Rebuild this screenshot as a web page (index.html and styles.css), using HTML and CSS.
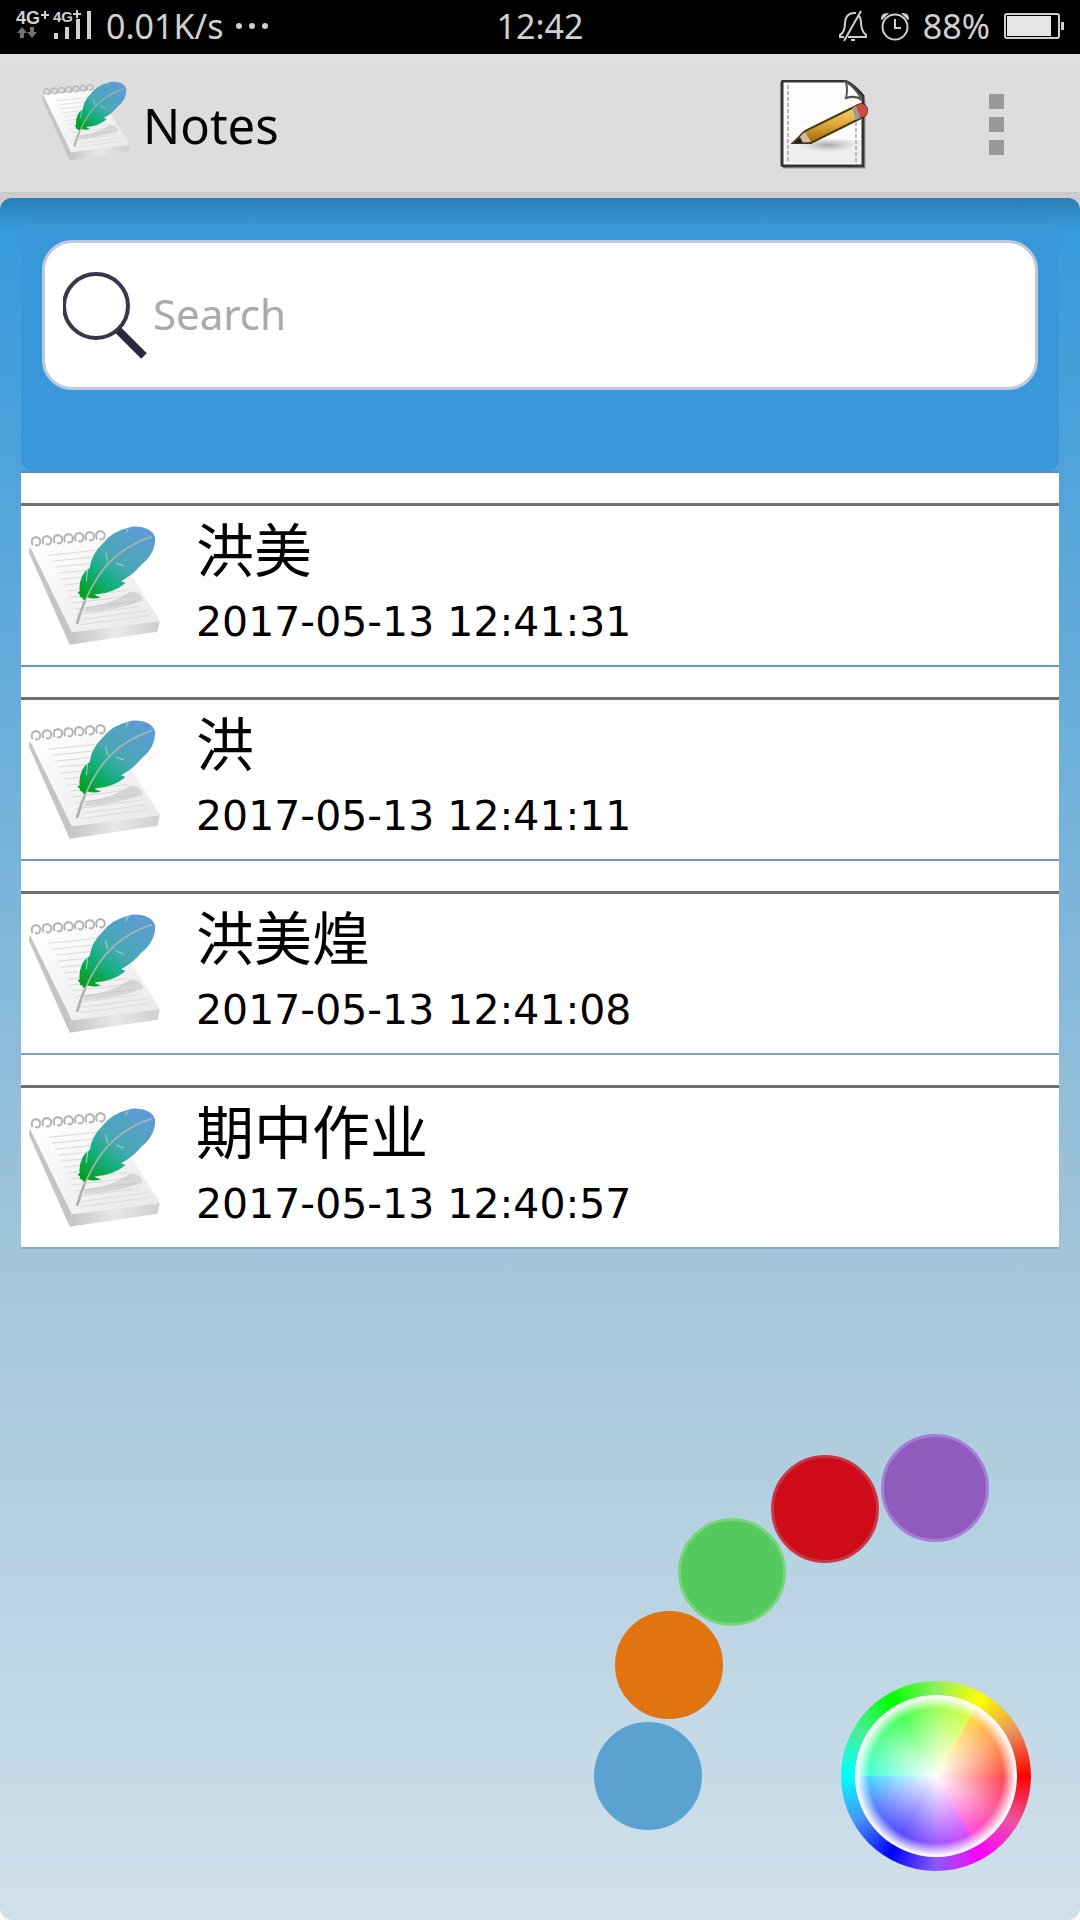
FILE: index.html
```html
<!DOCTYPE html>
<html lang="zh-CN">
<head>
<meta charset="utf-8">
<meta name="viewport" content="width=device-width, initial-scale=1">
<title>Notes</title>
<link rel="stylesheet" href="styles.css">
</head>
<body>
<svg class="defs" aria-hidden="true">
  <defs>
    <linearGradient id="feather" gradientUnits="userSpaceOnUse" x1="440" y1="200" x2="265" y2="410">
      <stop offset="0" stop-color="#5f9ad8"/><stop offset=".5" stop-color="#48a8b4"/>
      <stop offset=".72" stop-color="#14b080"/><stop offset="1" stop-color="#04a022"/>
    </linearGradient>
    <linearGradient id="sheet" x1="0" y1="0" x2="1" y2="1">
      <stop offset="0" stop-color="#ffffff"/><stop offset="1" stop-color="#e8e8e8"/>
    </linearGradient>
    <linearGradient id="edge" x1="0" y1="0" x2="1" y2="0">
      <stop offset="0" stop-color="#c4c4c4"/><stop offset=".5" stop-color="#e8e8e8"/><stop offset="1" stop-color="#cfcfcf"/>
    </linearGradient>
    <linearGradient id="pencil" x1="0" y1="0" x2="0" y2="1">
      <stop offset="0" stop-color="#f8dc80"/><stop offset=".5" stop-color="#dfaa38"/><stop offset="1" stop-color="#9a6810"/>
    </linearGradient>
    <radialGradient id="shade"><stop offset="0" stop-color="#888" stop-opacity=".7"/><stop offset="1" stop-color="#aaa" stop-opacity="0"/></radialGradient>
    <symbol id="note-icon" viewBox="80 190 405 370">
      <path d="M88 258L85 276L208 553L214 514Z" fill="#c4c4c4"/>
      <path d="M214 514L479 482L472 514L208 553Z" fill="url(#edge)"/>
      <path d="M90 256L325 236L480 482L216 516Z" fill="url(#sheet)"/>
      <g fill="none" stroke="#dadada" stroke-width="3">
        <path d="M145 284L300 268M155 302L310 286M164 320L320 304M172 338L330 322M181 356L345 340M190 374L360 356M199 392L370 374M208 410L382 390M216 428L398 405M224 446L408 422M228 463L416 438M242 477L440 451M240 493L446 465"/>
      </g>
      <path d="M255 440Q340 430 390 392Q425 395 428 420Q350 450 250 456Z" fill="#aaa" opacity=".35"/>
      <g fill="none" stroke="#b4b4b4" stroke-width="6">
        <path id="ring" d="M96 254Q88 232 106 229Q124 233 118 249Q113 258 104 252"/>
        <use href="#ring" x="33" y="-3"/><use href="#ring" x="66" y="-6"/><use href="#ring" x="98" y="-9"/>
        <use href="#ring" x="130" y="-12"/><use href="#ring" x="162" y="-15"/><use href="#ring" x="194" y="-18"/>
      </g>
      <path d="M412 198Q456 200 465 232Q466 278 424 312Q398 344 362 362Q372 364 375 368Q340 398 282 402Q294 410 303 410Q280 418 262 411L250 420Q246 408 238 410Q242 402 231 396Q242 392 237 385Q238 340 268 322Q274 280 306 250Q336 212 382 202Q396 197 412 198Z" fill="url(#feather)"/>
      <path d="M262 325L258 362M316 276L322 302M384 204L376 218M348 308L370 316" stroke="#a6dccb" stroke-width="3" fill="none"/>
      <path d="M455 228Q350 262 292 350Q254 408 230 490" fill="none" stroke="#a5b4ae" stroke-width="5"/>
      <path d="M252 425Q240 455 230 490" fill="none" stroke="#b0b0b0" stroke-width="8"/>
    </symbol>
  </defs>
</svg>

<div class="status">
  <div class="status-group">
    <svg class="signal" viewBox="0 -6 78 44" role="img" aria-label="Signal">
      <g class="net" fill="#d0d0d0">
        <text x="0" y="14" font-size="18">4G</text><text x="37" y="12" font-size="15">4G</text>
        <path d="M25 5h8M29 1v8M57 4h8M61 0v8" stroke="#d0d0d0" stroke-width="2"/>
        <path d="M38 23h4v6h-4zM49 17h4v12h-4zM60 9h4v20h-4zM71 1h4v28h-4z"/>
      </g>
      <path fill="#707070" d="M6 17l5 6H8v5H4v-5H1zM16 28l-5-6h3v-5h4v5h3z"/>
    </svg>
    <span>0.01K/s</span>
    <svg class="more" viewBox="0 0 34 8" aria-hidden="true"><g fill="#d0d0d0"><circle cx="4" cy="4" r="3"/><circle cx="17" cy="4" r="3"/><circle cx="30" cy="4" r="3"/></g></svg>
  </div>
  <time class="clock">12:42</time>
  <div class="status-group status-end">
    <svg class="bell" viewBox="0 0 28 32" aria-hidden="true"><g fill="none" stroke="#d0d0d0" stroke-width="2"><path d="M17 3Q7 2 6 13Q6 22 1 25V27H5M9 27H27V25Q22 21 22 12Q22 8 20 6M22 1L5 31"/><path d="M12 30h4"/></g></svg>
    <svg class="alarm" viewBox="0 0 28 30" aria-hidden="true"><g fill="none" stroke="#d0d0d0" stroke-width="2"><circle cx="14" cy="16" r="12.500"/><path d="M14 8v9h6"/></g><path fill="#d0d0d0" d="M0 8Q0 1 8 2L1 9ZM28 8Q28 1 20 2L27 9Z"/></svg>
    <span class="percent">88%</span>
    <svg class="battery" viewBox="0 0 60 26" aria-hidden="true"><rect x="1" y="1" width="54" height="24" rx="2" fill="none" stroke="#d0d0d0" stroke-width="2"/><path fill="#e6e6e6" d="M3 3h44v20H3z"/><path fill="#d0d0d0" d="M57 9h3v8h-3z"/></svg>
  </div>
</div>

<header class="appbar">
  <svg class="logo" aria-hidden="true"><use href="#note-icon"/></svg>
  <h1>Notes</h1>
  <button class="bar-button compose" type="button" aria-label="New note">
    <svg viewBox="0 0 90 90" aria-hidden="true">
      <path d="M3 4H66L86 20V89H3Z" fill="#777" opacity=".35"/>
      <path d="M4 1H65Q74 5 83 16V86H4Q2 86 2 84V3Q2 1 4 1Z" fill="#fcfcfb" stroke="#333" stroke-width="3"/>
      <path d="M5 60H81V83H5Z" fill="#e4e4e2" opacity=".6"/>
      <path d="M8 5V82M76 30V82" fill="none" stroke="#bbb" stroke-width="2" stroke-dasharray="4 2"/>
      <path d="M66 2Q68 10 66 18Q76 15 82 20Q76 8 66 2Z" fill="#fff" stroke="#555" stroke-width="2"/>
      <ellipse cx="48" cy="65" rx="30" ry="7" fill="url(#shade)"/>
      <path d="M13 63L25 51L78 25Q85 22 87 29Q88 34 83 37L31 63Z" fill="url(#pencil)" stroke="#47381c" stroke-width="2"/>
      <path d="M13 63L25 52L31 62Z" fill="#d5b99c"/><path d="M13 63L20 57L23 63Z" fill="#222"/>
      <path d="M76 26L80 38L84 36Q89 33 87 28Q84 22 78 25Z" fill="#cf4a40"/><path d="M72 28L76 26L80 38L76 40Z" fill="#999"/>
    </svg>
  </button>
  <button class="bar-button overflow" type="button" aria-label="More options"><i></i><i></i><i></i></button>
</header>

<main class="page">
  <form class="search-panel" role="search">
    <label class="search-box">
      <svg class="lens" viewBox="0 0 88 88" role="img" aria-label="Search"><circle cx="33" cy="35" r="32" fill="none" stroke="#38364a" stroke-width="4"/><path d="M55 59L81 85" stroke="#2c2a3a" stroke-width="8"/></svg>
      <input type="text" placeholder="Search">
    </label>
  </form>
  <ul class="notes">
    <li><a class="note" href="#note-4"><svg class="note-icon" aria-hidden="true"><use href="#note-icon"/></svg><span class="note-text"><span class="note-title">洪美</span><time>2017-05-13 12:41:31</time></span></a></li>
    <li><a class="note" href="#note-3"><svg class="note-icon" aria-hidden="true"><use href="#note-icon"/></svg><span class="note-text"><span class="note-title">洪</span><time>2017-05-13 12:41:11</time></span></a></li>
    <li><a class="note" href="#note-2"><svg class="note-icon" aria-hidden="true"><use href="#note-icon"/></svg><span class="note-text"><span class="note-title">洪美煌</span><time>2017-05-13 12:41:08</time></span></a></li>
    <li><a class="note" href="#note-1"><svg class="note-icon" aria-hidden="true"><use href="#note-icon"/></svg><span class="note-text"><span class="note-title">期中作业</span><time>2017-05-13 12:40:57</time></span></a></li>
  </ul>
  <div class="palette">
    <button class="swatch purple" type="button" aria-label="Purple"></button>
    <button class="swatch red" type="button" aria-label="Red"></button>
    <button class="swatch green" type="button" aria-label="Green"></button>
    <button class="swatch orange" type="button" aria-label="Orange"></button>
    <button class="swatch blue" type="button" aria-label="Blue"></button>
    <button class="wheel" type="button" aria-label="Theme colour"><span class="wheel-face"></span></button>
  </div>
</main>
</body>
</html>
```
FILE: styles.css
```css
* { box-sizing: border-box; }

body {
  margin: 0;
  min-height: 100vh;
  display: flex;
  flex-direction: column;
  background: #fff;
  color: #000;
  font-family: "Noto Sans", "Noto Sans CJK SC", sans-serif;
}

button {
  padding: 0;
  border: 0;
  background: none;
  cursor: pointer;
}

svg { display: block; }
.defs { position: absolute; width: 0; height: 0; }

/* Status bar */
.status {
  height: 54px;
  padding: 0 16px 2px;
  display: grid;
  grid-template-columns: 1fr auto 1fr;
  align-items: center;
  background: #000;
  color: #d0d0d0;
  font-size: 34px;
  line-height: 48px;
}
.status-group { display: flex; align-items: center; gap: 12px; }
.status-end { justify-content: flex-end; gap: 14px; }
.signal { width: 78px; height: 44px; }
.net { font-family: "Liberation Sans", Arial, sans-serif; font-weight: 700; }
.more { width: 34px; height: 8px; }
.bell { width: 28px; height: 32px; }
.alarm { width: 28px; height: 30px; }
.battery { width: 60px; height: 26px; }

/* App bar */
.appbar {
  height: 144px;
  padding: 0 76px 0 41px;
  display: flex;
  align-items: center;
  background: #ddd;
  border-top: 3px solid #e1e1e1;
  border-bottom: 6px solid #ccc;
  box-shadow: 0 14px 0 #ccc;
}
.logo { width: 90px; height: 82px; margin-bottom: 8px; }
h1 { flex: 1; margin: 0 0 0 12px; font-size: 49px; font-weight: 400; line-height: 64px; }
.compose svg { width: 90px; height: 90px; }
.overflow {
  margin-left: 119px;
  display: flex;
  flex-direction: column;
  gap: 8px;
}
.overflow i { width: 15px; height: 15px; background: #999; }

/* Page */
.page {
  position: relative;
  flex: 1;
  padding: 21px 21px 0;
  border-radius: 12px;
  background: linear-gradient(#3498db, #a0c4da 60%, #d1e1eb);
}
.page::after {
  content: "";
  position: absolute;
  inset: 0 0 auto;
  height: 30px;
  border-radius: 12px 12px 0 0;
  background: linear-gradient(rgba(0, 0, 0, .18), transparent);
  pointer-events: none;
}
.search-panel {
  padding: 21px 21px 81px;
  border-radius: 12px;
  background: #3897d8;
}
.search-box {
  height: 150px;
  padding: 0 18px;
  display: flex;
  align-items: center;
  border: 3px solid #c0c6dc;
  border-radius: 30px;
  background: #fff;
}
.lens { width: 88px; height: 88px; flex: none; }
.search-box input {
  flex: 1;
  min-width: 0;
  padding: 0 0 4px 2px;
  border: 0;
  outline: 0;
  background: none;
  font: inherit;
  font-size: 42px;
}
.search-box input::placeholder { color: #aaa; opacity: 1; }

/* Notes list */
.notes { margin: 0; padding: 0; list-style: none; border-top: 2px solid rgba(64, 112, 144, .3); }
.notes li { padding-top: 30px; background: #fff; background-clip: padding-box; border-bottom: 2px solid rgba(64, 112, 144, .3); }
.note {
  height: 162px;
  padding-left: 6px;
  display: flex;
  align-items: center;
  gap: 34px;
  border-top: 3px solid #707070;
  color: inherit;
  text-decoration: none;
}
.note-icon { width: 135px; height: 123px; flex: none; }
.note-text { display: flex; flex-direction: column; padding-top: 4px; }
.note-title { font-family: "Noto Sans CJK SC", sans-serif; font-size: 58px; line-height: 68px; }
.note time { font-family: "DejaVu Sans", sans-serif; font-size: 41px; line-height: 82px; }

/* Colour picker fanned out around the wheel */
.palette { position: absolute; right: 0; bottom: 0; width: 486px; height: 486px; }
.swatch {
  position: absolute;
  width: 108px;
  height: 108px;
  border: 3px solid transparent;
  border-radius: 50%;
}
.purple { right: 91px; bottom: 378px; background: #915bbe; border-color: #a27fd8; }
.red { right: 201px; bottom: 357px; background: #cd0b19; border-color: #c93745; }
.green { right: 294px; bottom: 294px; background: #54c95e; border-color: #79d47e; }
.orange { right: 357px; bottom: 201px; background: #e17310; border-color: #e17310; }
.blue { right: 378px; bottom: 90px; background: #5aa3d0; border-color: #5aa3d0; }
.wheel {
  position: absolute;
  right: 49px;
  bottom: 49px;
  width: 190px;
  height: 190px;
  display: grid;
  place-items: center;
  border-radius: 50%;
  background: conic-gradient(#8eee62, #ff0 30deg, #e6935c 60deg, #f00 90deg, #ec559f 120deg, #f0f 150deg, #8c5af5 180deg, #00f 210deg, #4a90f5 240deg, #0ff 270deg, #48ee98 300deg, #0f0 330deg, #8eee62);
}
.wheel-face {
  width: 162px;
  height: 162px;
  border-radius: 50%;
  background:
    radial-gradient(circle, #fff, rgba(255, 255, 255, 0) 67px, #fff 80px),
    conic-gradient(#9cff5c, #d8ff48 30deg, #ffd848 30deg, #ff9c5c 60deg, #ff5448 90deg, #ff4854 90deg, #ff5c9c 120deg, #ff48d8 150deg, #d848ff 150deg, #9c5cff 180deg, #5448ff 210deg, #5c78ff 240deg, #48d8ff 270deg, #48ffd8 270deg, #5cff9c 300deg, #48ff54 330deg, #9cff5c);
}
```
